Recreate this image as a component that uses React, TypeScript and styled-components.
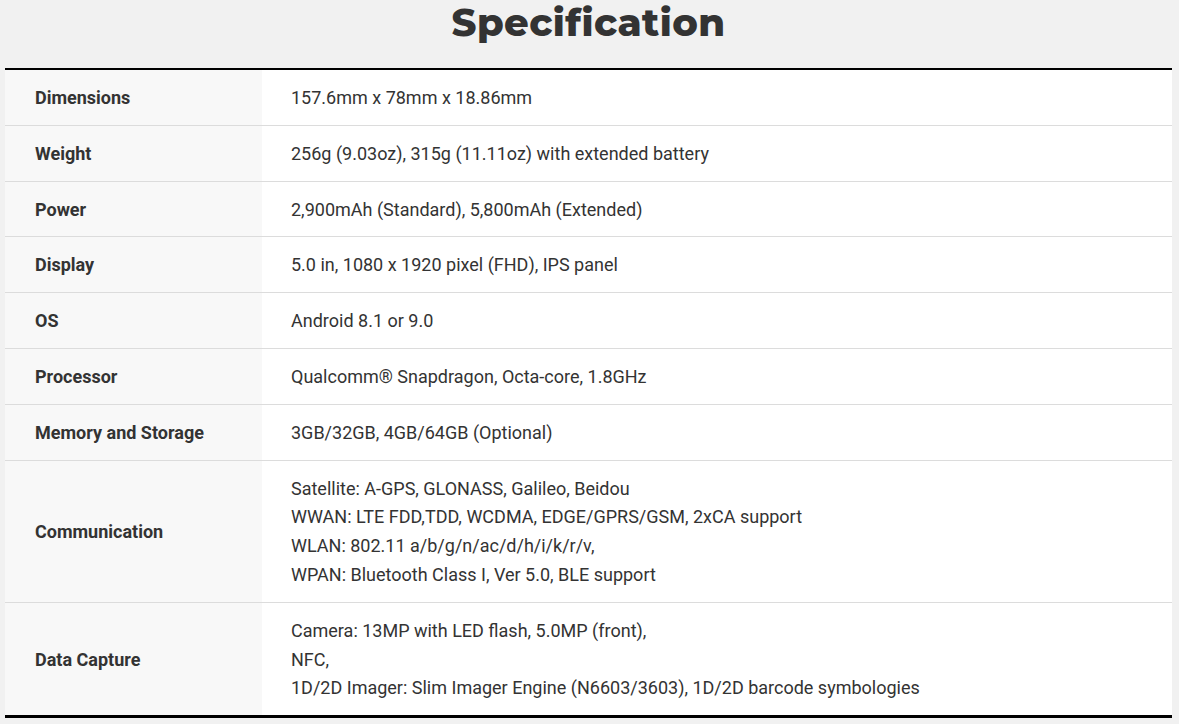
import React from "react";
import styled, { createGlobalStyle } from "styled-components";

const Global = createGlobalStyle`
  html, body { margin: 0; padding: 0; background: #f1f1f1; }
  body { font-family: Roboto, "Liberation Sans", sans-serif; color: #333; }
`;

const Page = styled.div`
  padding: 0 7px 0 5px;
`;

const Title = styled.h2`
  margin: 0;
  height: 68px;
  padding-top: 1px;
  box-sizing: border-box;
  text-align: center;
  font-family: Montserrat, "Open Sans", sans-serif;
  font-weight: 800;
  font-size: 38.5px;
  line-height: 44px;
  letter-spacing: 0.4px;
  color: #333;
`;

const Table = styled.table`
  width: 100%;
  border-collapse: collapse;
  border-top: 2px solid #000;
  border-bottom: 3px solid #000;
  background: #fff;
`;

const Row = styled.tr`
  & + & { border-top: 1px solid #dcdcdc; }
`;

const Label = styled.th`
  width: 197px;
  background: #f8f8f8;
  text-align: left;
  font-weight: 700;
  font-size: 18px;
  line-height: 1.6;
  padding: 14px 30px 12px;
  color: #333;
`;

const Value = styled.td`
  padding: 14px 29px 12px;
  font-size: 18px;
  line-height: 1.6;
  color: #333;
`;

const rows: [string, string[]][] = [
  ["Dimensions", ["157.6mm x 78mm x 18.86mm"]],
  ["Weight", ["256g (9.03oz), 315g (11.11oz) with extended battery"]],
  ["Power", ["2,900mAh (Standard), 5,800mAh (Extended)"]],
  ["Display", ["5.0 in, 1080 x 1920 pixel (FHD), IPS panel"]],
  ["OS", ["Android 8.1 or 9.0"]],
  ["Processor", ["Qualcomm® Snapdragon, Octa-core, 1.8GHz"]],
  ["Memory and Storage", ["3GB/32GB, 4GB/64GB (Optional)"]],
  [
    "Communication",
    [
      "Satellite: A-GPS, GLONASS, Galileo, Beidou",
      "WWAN: LTE FDD,TDD, WCDMA, EDGE/GPRS/GSM, 2xCA support",
      "WLAN: 802.11 a/b/g/n/ac/d/h/i/k/r/v,",
      "WPAN: Bluetooth Class I, Ver 5.0, BLE support",
    ],
  ],
  [
    "Data Capture",
    [
      "Camera: 13MP with LED flash, 5.0MP (front),",
      "NFC,",
      "1D/2D Imager: Slim Imager Engine (N6603/3603), 1D/2D barcode symbologies",
    ],
  ],
];

export default function App() {
  return (
    <>
      <Global />
      <Page>
        <Title>Specification</Title>
        <Table>
          <tbody>
            {rows.map(([k, v]) => (
              <Row key={k}>
                <Label>{k}</Label>
                <Value>
                  {v.map((line, i) => (
                    <React.Fragment key={i}>
                      {i > 0 && <br />}
                      {line}
                    </React.Fragment>
                  ))}
                </Value>
              </Row>
            ))}
          </tbody>
        </Table>
      </Page>
    </>
  );
}
